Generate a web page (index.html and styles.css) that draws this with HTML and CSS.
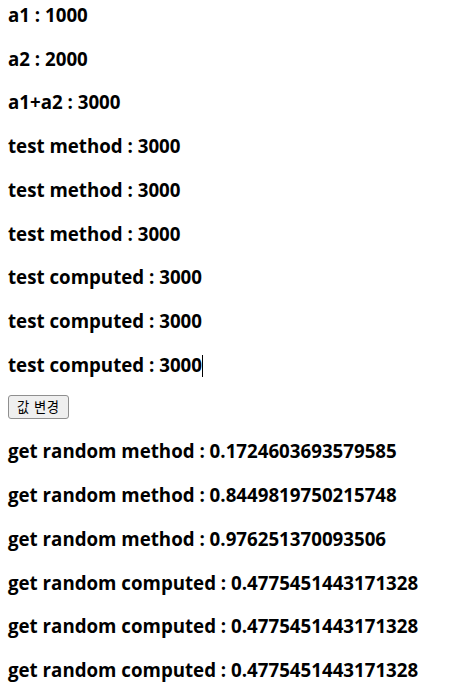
FILE: index.html
```html
<!DOCTYPE html>
<html lang="ko">
<head>
<meta charset="utf-8">
<link rel="stylesheet" href="styles.css">
</head>
<body>
<div class="app">
  <h3 class="line">a1 : 1000</h3>
  <h3 class="line">a2 : 2000</h3>
  <h3 class="line">a1+a2 : 3000</h3>
  <h3 class="line">test method : 3000</h3>
  <h3 class="line">test method : 3000</h3>
  <h3 class="line">test method : 3000</h3>
  <h3 class="line">test computed : 3000</h3>
  <h3 class="line">test computed : 3000</h3>
  <h3 class="line">test computed : 3000<span class="caret"></span></h3>
  <button class="btn">값 변경</button>
  <h3 class="line">get random method : 0.1724603693579585</h3>
  <h3 class="line">get random method : 0.8449819750215748</h3>
  <h3 class="line">get random method : 0.976251370093506</h3>
  <h3 class="line">get random computed : 0.4775451443171328</h3>
  <h3 class="line">get random computed : 0.4775451443171328</h3>
  <h3 class="line">get random computed : 0.4775451443171328</h3>
</div>
</body>
</html>
```
FILE: styles.css
```css
html, body {
  margin: 0;
  padding: 0;
  background: #fff;
}
body {
  padding: 2px 8px 0 8px;
  font-family: "Open Sans", "Noto Sans CJK KR", sans-serif;
  color: #000;
}
.app {
  display: block;
}
.line {
  font-size: 18.72px;
  font-weight: bold;
  line-height: 25px;
  margin: 0 0 18.72px 0;
  white-space: nowrap;
}
.caret {
  display: inline-block;
  width: 1px;
  height: 22px;
  background: #000;
  vertical-align: -5px;
}
.btn {
  display: block;
  font-family: "Noto Sans CJK KR", sans-serif;
  font-size: 13.33px;
  line-height: 18px;
  letter-spacing: 0.5px;
  padding: 2px 8px;
  margin: 1px 0 19px 0;
  border: 1px solid #8f8f8f;
  border-radius: 3px;
  background: #efefef;
  color: #000;
}
```
